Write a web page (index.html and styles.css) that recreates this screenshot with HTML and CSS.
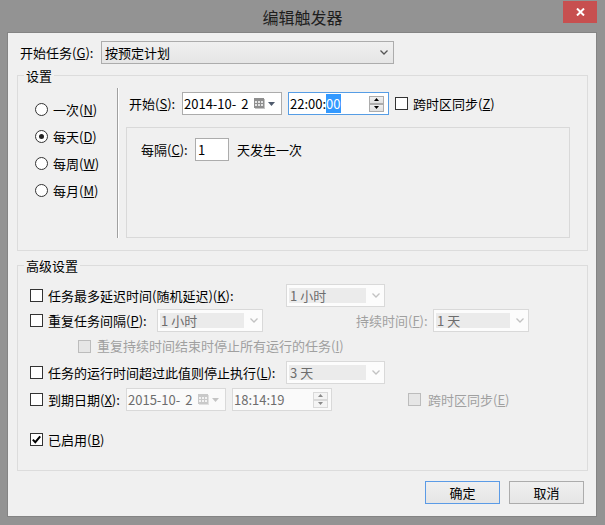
FILE: index.html
```html
<!DOCTYPE html>
<html lang="zh-CN">
<head>
<meta charset="utf-8">
<title>编辑触发器</title>
<link rel="stylesheet" href="styles.css">
</head>
<body>
<div class="window">
  <div class="titlebar">
    <div class="tb-spacer"></div>
    <div class="title">编辑触发器</div>
    <div class="tb-right">
      <div class="close"><svg width="9" height="8" viewBox="0 0 9 8"><path d="M1 0.5 L8 7.5 M8 0.5 L1 7.5" stroke="#fff" stroke-width="2"/></svg></div>
    </div>
  </div>
  <div class="client">
    <div class="task-row">
      <span class="task-label">开始任务(<u>G</u>):</span>
      <div class="combo combo-task">
        <span class="combo-text">按预定计划</span>
        <svg class="chev" width="8" height="5" viewBox="0 0 8 5"><path d="M0.5 0.5 L4 4 L7.5 0.5" fill="none" stroke="#555" stroke-width="1.3"/></svg>
      </div>
    </div>

    <div class="group group-settings">
      <div class="legend">设置</div>
      <div class="settings-body">
        <div class="freq-col">
          <div class="radio-row"><span class="radio"></span><span>一次(<u>N</u>)</span></div>
          <div class="radio-row"><span class="radio checked"><span class="dot"></span></span><span>每天(<u>D</u>)</span></div>
          <div class="radio-row"><span class="radio"></span><span>每周(<u>W</u>)</span></div>
          <div class="radio-row"><span class="radio"></span><span>每月(<u>M</u>)</span></div>
        </div>
        <div class="vsep"></div>
        <div class="sched-col">
          <div class="start-row">
            <span class="start-label">开始(<u>S</u>):</span>
            <div class="field date-box">
              <span class="field-text">2014-10-<span class="daygap">2</span></span>
              <svg class="cal" width="11" height="11" viewBox="0 0 11 11">
                <rect x="0" y="0" width="10" height="10" fill="#8e8e8e"/>
                <rect x="10" y="1" width="1" height="10" fill="#c4c4c4"/>
                <rect x="1" y="10" width="10" height="1" fill="#c4c4c4"/>
                <g fill="#e2e2e2">
                  <rect x="1" y="3" width="2" height="2"/><rect x="4" y="3" width="2" height="2"/><rect x="7" y="3" width="2" height="2"/>
                  <rect x="1" y="6" width="2" height="2"/><rect x="4" y="6" width="2" height="2"/><rect x="7" y="6" width="2" height="2"/>
                </g>
              </svg>
              <svg class="tri" width="7" height="4" viewBox="0 0 7 4"><path d="M0 0 H7 L3.5 4 Z" fill="#4f5b6d"/></svg>
            </div>
            <div class="field time-box focus">
              <span class="field-text">22:00:<span class="sel">00</span></span>
              <div class="spin">
                <div class="spin-btn"><svg width="5" height="3" viewBox="0 0 5 3"><path d="M0 3 H5 L2.5 0 Z" fill="#000"/></svg></div>
                <div class="spin-btn"><svg width="5" height="3" viewBox="0 0 5 3"><path d="M0 0 H5 L2.5 3 Z" fill="#000"/></svg></div>
              </div>
            </div>
            <span class="check start-check"></span>
            <span class="check-label">跨时区同步(<u>Z</u>)</span>
          </div>
          <div class="recur-panel">
            <div class="recur-row">
              <span class="recur-label">每隔(<u>C</u>):</span>
              <div class="field recur-input"><span class="field-text">1</span></div>
              <span class="recur-text">天发生一次</span>
            </div>
          </div>
        </div>
      </div>
    </div>

    <div class="group group-adv">
      <div class="legend">高级设置</div>

      <div class="adv-row row1">
        <span class="check"></span>
        <span class="adv-label w238">任务最多延迟时间(随机延迟)(<u>K</u>):</span>
        <div class="dcombo w99"><span class="dcombo-field">1 小时</span><svg class="dchev" width="8" height="5" viewBox="0 0 8 5"><path d="M0.5 0.5 L4 4 L7.5 0.5" fill="none" stroke="#c2c2c2" stroke-width="1.3"/></svg></div>
      </div>

      <div class="adv-row row2">
        <span class="check"></span>
        <span class="adv-label w109">重复任务间隔(<u>P</u>):</span>
        <div class="dcombo w106"><span class="dcombo-field">1 小时</span><svg class="dchev" width="8" height="5" viewBox="0 0 8 5"><path d="M0.5 0.5 L4 4 L7.5 0.5" fill="none" stroke="#c2c2c2" stroke-width="1.3"/></svg></div>
        <span class="adv-label dim dur-label">持续时间(<u>F</u>):</span>
        <div class="dcombo w96"><span class="dcombo-field">1 天</span><svg class="dchev" width="8" height="5" viewBox="0 0 8 5"><path d="M0.5 0.5 L4 4 L7.5 0.5" fill="none" stroke="#c2c2c2" stroke-width="1.3"/></svg></div>
      </div>

      <div class="adv-row row3">
        <span class="check disabled sub-check"></span>
        <span class="dim">重复持续时间结束时停止所有运行的任务(<u>I</u>)</span>
      </div>

      <div class="adv-row row4">
        <span class="check"></span>
        <span class="adv-label w238">任务的运行时间超过此值则停止执行(<u>L</u>):</span>
        <div class="dcombo w99"><span class="dcombo-field">3 天</span><svg class="dchev" width="8" height="5" viewBox="0 0 8 5"><path d="M0.5 0.5 L4 4 L7.5 0.5" fill="none" stroke="#c2c2c2" stroke-width="1.3"/></svg></div>
      </div>

      <div class="adv-row row5">
        <span class="check"></span>
        <span class="adv-label w78">到期日期(<u>X</u>):</span>
        <div class="field dfield exp-date">
          <span class="field-text">2015-10-<span class="daygap">2</span></span>
          <svg class="cal" width="11" height="11" viewBox="0 0 11 11">
            <rect x="0" y="0" width="10" height="10" fill="#c9c9c9"/>
            <rect x="10" y="1" width="1" height="10" fill="#e0e0e0"/>
            <rect x="1" y="10" width="10" height="1" fill="#e0e0e0"/>
            <g fill="#f2f2f2">
              <rect x="1" y="3" width="2" height="2"/><rect x="4" y="3" width="2" height="2"/><rect x="7" y="3" width="2" height="2"/>
              <rect x="1" y="6" width="2" height="2"/><rect x="4" y="6" width="2" height="2"/><rect x="7" y="6" width="2" height="2"/>
            </g>
          </svg>
          <svg class="tri" width="7" height="4" viewBox="0 0 7 4"><path d="M0 0 H7 L3.5 4 Z" fill="#c4c4c4"/></svg>
        </div>
        <div class="field dfield exp-time">
          <span class="field-text">18:14:19</span>
          <div class="spin">
            <div class="spin-btn dis"><svg width="5" height="3" viewBox="0 0 5 3"><path d="M0 3 H5 L2.5 0 Z" fill="#8a8a8a"/></svg></div>
            <div class="spin-btn dis"><svg width="5" height="3" viewBox="0 0 5 3"><path d="M0 0 H5 L2.5 3 Z" fill="#8a8a8a"/></svg></div>
          </div>
        </div>
        <span class="check disabled exp-check"></span>
        <span class="dim exp-label">跨时区同步(<u>E</u>)</span>
      </div>

      <div class="adv-row row6">
        <span class="check"><svg width="11" height="11" viewBox="0 0 11 11"><path d="M1.8 5.6 L4.3 8.2 L9.2 2.4" fill="none" stroke="#000" stroke-width="2"/></svg></span>
        <span class="adv-label">已启用(<u>B</u>)</span>
      </div>
    </div>

    <div class="buttons">
      <div class="btn default">确定</div>
      <div class="btn">取消</div>
    </div>
  </div>
</div>
</body>
</html>
```

FILE: styles.css
```css
* { box-sizing: border-box; }

html, body {
  margin: 0;
  padding: 0;
  background: #939393;
}

body {
  font-family: "Noto Sans CJK SC", "Noto Sans", sans-serif;
  font-size: 13px;
  line-height: 16px;
  color: #000;
}

u { text-decoration: underline; text-underline-offset: 1px; }

.window {
  width: 605px;
  height: 525px;
  background: #939393;
  overflow: hidden;
}

.titlebar {
  height: 32px;
  display: grid;
  grid-template-columns: 1fr auto 1fr;
}

.title {
  font-size: 16px;
  line-height: 20px;
  padding-top: 7px;
  color: #1e1e1e;
}

.tb-right {
  display: flex;
  justify-content: flex-end;
  align-items: flex-start;
}

.close {
  width: 34px;
  height: 22px;
  margin-top: 1px;
  margin-right: 8px;
  background: #c75050;
  display: flex;
  align-items: center;
  justify-content: center;
}

.client {
  width: 590px;
  height: 485px;
  margin-left: 7px;
  background: #f0f0f0;
  border: 1px solid #848484;
}

/* top row */
.task-row {
  margin-top: 8px;
  padding-left: 12px;
  height: 23px;
  display: flex;
  align-items: center;
}
.task-label { width: 81px; }

.combo {
  height: 23px;
  border: 1px solid #acacac;
  background: linear-gradient(#f0f0f0, #e5e5e5);
  display: flex;
  align-items: center;
}
.combo-task { width: 293px; }
.combo-text { flex: 1; padding-left: 3px; }
.chev { margin-right: 5px; }

/* group boxes */
.group {
  width: 571px;
  margin-left: 9px;
  border: 1px solid #dcdcdc;
}
.legend {
  width: fit-content;
  margin-top: -9px;
  margin-left: 6px;
  padding: 0 2px;
  line-height: 18px;
  height: 18px;
  background: #f0f0f0;
}
.group-settings {
  margin-top: 11px;
  padding-bottom: 12px;
}
.settings-body {
  margin-top: 3px;
  height: 150px;
  display: flex;
}
.freq-col {
  width: 99px;
  padding-top: 8px;
  padding-left: 17px;
}
.radio-row {
  height: 27px;
  display: flex;
  align-items: center;
  gap: 5px;
}
.radio {
  width: 13px;
  height: 13px;
  border: 1px solid #333;
  border-radius: 50%;
  background: #fff;
  display: flex;
  align-items: center;
  justify-content: center;
}
.radio .dot {
  width: 5px;
  height: 5px;
  border-radius: 50%;
  background: #222;
}
.vsep {
  width: 2px;
  border-left: 1px solid #a0a0a0;
  border-right: 1px solid #fff;
}
.sched-col {
  flex: 1;
}
.start-row {
  margin-top: 4px;
  padding-left: 10px;
  height: 23px;
  display: flex;
  align-items: center;
}
.start-label { width: 53px; }

.field {
  height: 23px;
  border: 1px solid #acacac;
  background: #fff;
  display: flex;
  align-items: center;
}
.field-text { flex: 1; padding-left: 1px; white-space: nowrap; }
.daygap { margin-left: 5px; }
.date-box { width: 100px; padding-right: 6px; }
.date-box .field-text { padding-left: 1px; }
.cal { margin-right: 3px; }
.time-box { width: 101px; margin-left: 6px; padding-right: 4px; }
.focus { border-color: #569de5; }
.sel { background: #3399ff; color: #fff; }

.spin {
  display: flex;
  flex-direction: column;
}
.spin-btn {
  width: 15px;
  height: 8px;
  border: 1px solid #acacac;
  background: linear-gradient(#f0f0f0, #e0e0e0);
  display: flex;
  align-items: center;
  justify-content: center;
}
.spin-btn.dis { border-color: #d9d9d9; background: #f4f4f4; }

.check {
  width: 13px;
  height: 13px;
  flex: none;
  border: 1px solid #333;
  background: #fff;
  display: flex;
  align-items: center;
  justify-content: center;
}
.check.disabled { border-color: #bcbcbc; background: #e6e6e6; }
.start-check { margin-left: 6px; }
.check-label { margin-left: 5px; }

.recur-panel {
  margin-left: 7px;
  margin-top: 12px;
  width: 444px;
  height: 111px;
  border: 1px solid #d9d9d9;
  padding-top: 10px;
  padding-left: 14px;
}
.recur-row {
  height: 23px;
  display: flex;
  align-items: center;
}
.recur-label { width: 54px; }
.recur-input { width: 34px; }
.recur-input .field-text { padding-left: 2px; }
.recur-text { margin-left: 8px; }

/* advanced */
.group-adv {
  margin-top: 14px;
  padding-bottom: 19px;
}
.adv-row {
  height: 23px;
  padding-left: 12px;
  display: flex;
  align-items: center;
}
.adv-row .check + .adv-label { margin-left: 5px; }
.row1 { margin-top: 9px; }
.row2 { margin-top: 2px; }
.row3 { margin-top: 4px; height: 20px; }
.row4 { margin-top: 5px; }
.row5 { margin-top: 4px; }
.row6 { margin-top: 17px; }

.adv-row .adv-label.w238 { width: 238px; }
.adv-row .adv-label.w109 { width: 109px; }
.adv-row .adv-label.w78 { width: 78px; }

.dim { color: #a0a0a0; }
.sub-check { margin-left: 48px; margin-right: 6px; }
.dur-label { width: 77px; margin-left: 93px; }

.dcombo {
  height: 23px;
  border: 1px solid #d9d9d9;
  background: #fcfcfc;
  padding: 3px 0 3px 2px;
  display: flex;
  align-items: center;
}
.dcombo.w99 { width: 99px; }
.dcombo.w106 { width: 106px; }
.dcombo.w96 { width: 96px; }
.dcombo-field {
  flex: 1;
  height: 15px;
  line-height: 15px;
  background: #ebebeb;
  color: #6d6d6d;
  padding-left: 1px;
}
.dchev { margin: 0 4px 0 6px; }

.dfield { border-color: #d9d9d9; background: #fafafa; color: #6d6d6d; }
.exp-date { width: 100px; padding-right: 6px; }
.exp-time { width: 100px; margin-left: 6px; padding-right: 3px; }
.exp-check { margin-left: 76px; }
.exp-label { margin-left: 7px; }

/* buttons */
.buttons {
  margin-top: 10px;
  padding-right: 12px;
  display: flex;
  justify-content: flex-end;
  gap: 9px;
}
.btn {
  width: 75px;
  height: 23px;
  border: 1px solid #acacac;
  background: linear-gradient(#f0f0f0, #e5e5e5);
  display: flex;
  align-items: center;
  justify-content: center;
}
.btn.default { border-color: #5b9be6; }
```
